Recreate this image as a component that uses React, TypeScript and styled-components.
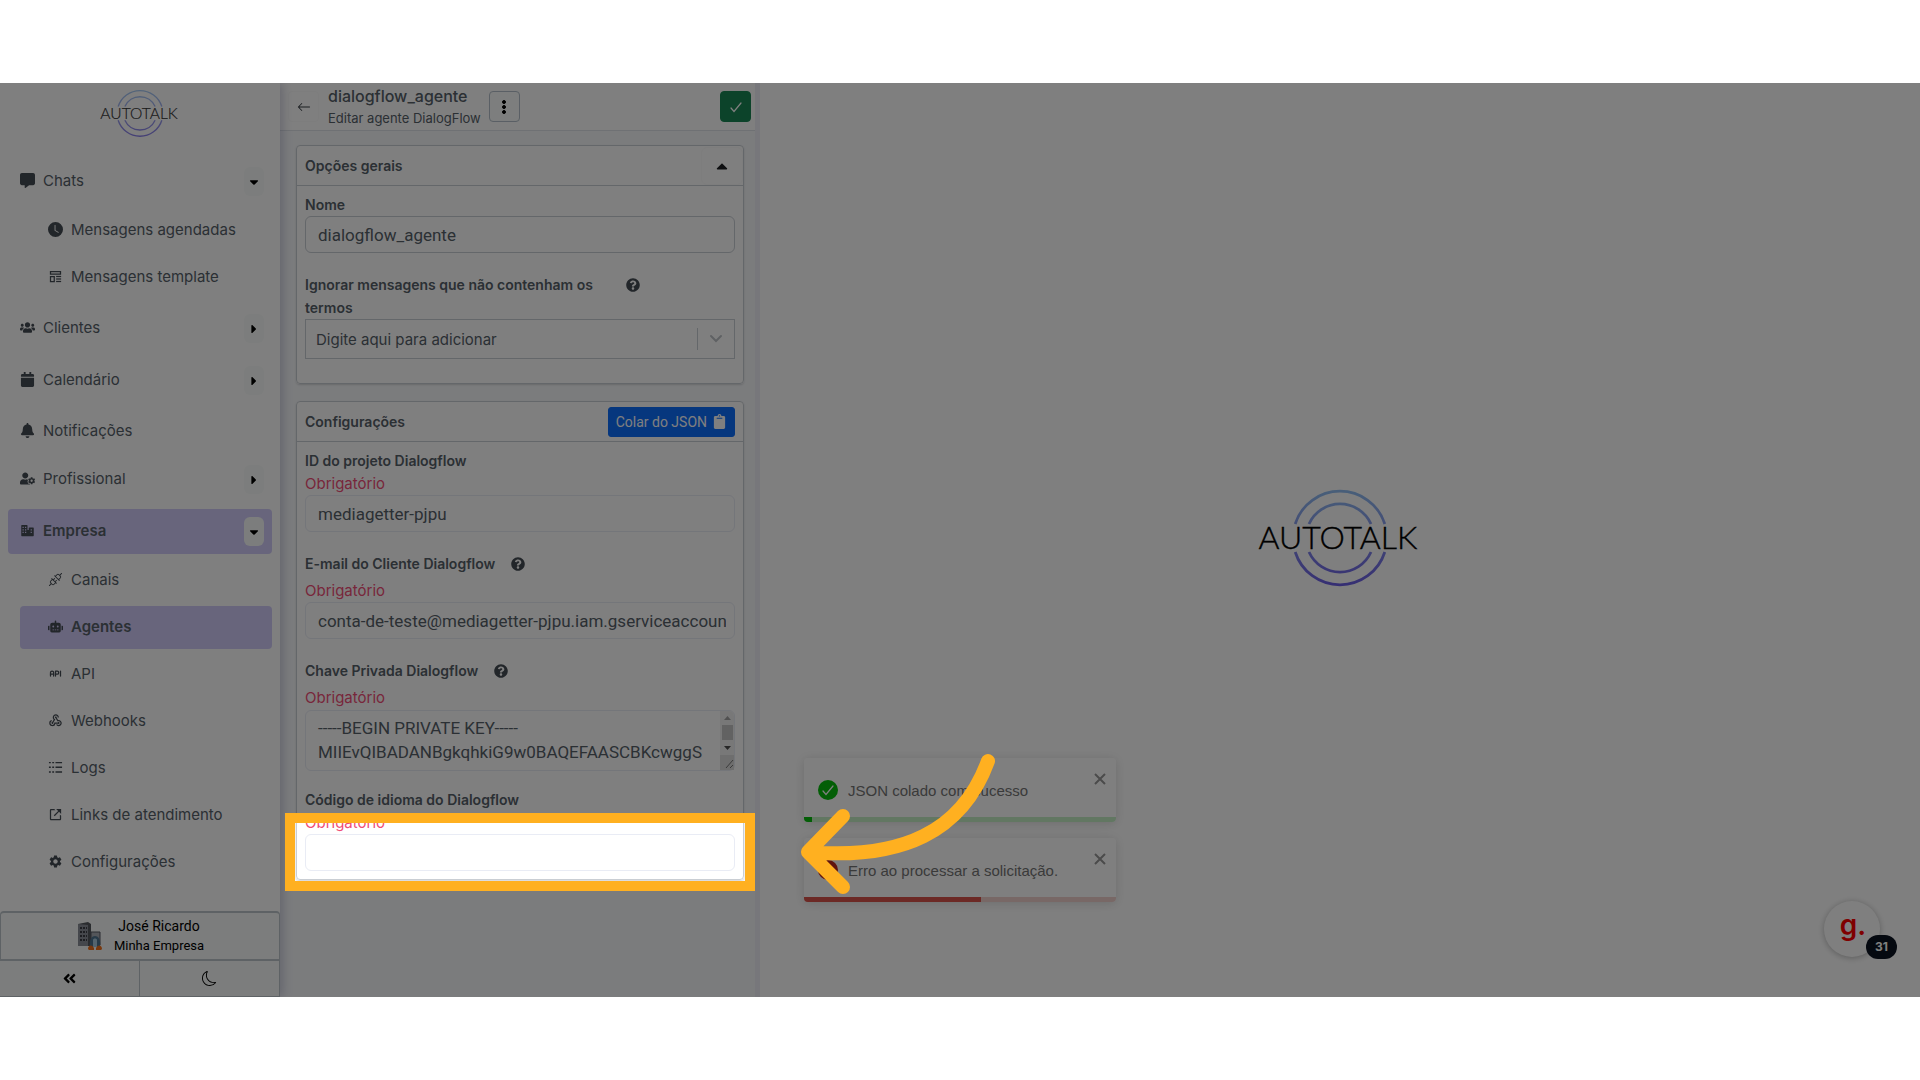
import React from "react";
import styled, { createGlobalStyle, css } from "styled-components";
import {
  FaUsers, FaBell, FaRobot, FaUserCog, FaCalendar, FaCaretDown, FaCaretRight, FaCaretUp,
  FaAngleDoubleLeft, FaClipboard, FaQuestionCircle,
} from "react-icons/fa";
import { FaMessage } from "react-icons/fa6";
import { BsClockFill, BsArrowLeft, BsThreeDotsVertical, BsMoon } from "react-icons/bs";
import { CgTemplate } from "react-icons/cg";
import { MdWebhook, MdSettings } from "react-icons/md";
import { TbApi } from "react-icons/tb";
import { PiPlugs } from "react-icons/pi";
import { BiLinkExternal, BiSolidBusiness } from "react-icons/bi";

const ui = `Inter, "Liberation Sans", sans-serif`;
const field = `Roboto, "Liberation Sans", sans-serif`;
const text = "#566069";
const dark = "#454c54";
const line = "#c9ced4";
const accent = "#ffb020";

const GlobalStyle = createGlobalStyle`
  *, *::before, *::after { box-sizing: border-box; }
  body { margin: 0; background: #fff; color: ${text}; font-family: ${ui}; font-size: 15px; }
  button, input, textarea { font: inherit; color: inherit; }
  ul { list-style: none; margin: 0; padding: 0; }
`;

const Stage = styled.div`
  display: flex;
  position: relative;
  height: calc(100vh - 166px);
  min-height: 914px;
  margin: 83px 0;
  overflow: hidden;
  background: #fff;
`;

/* Sidebar */
const Sidebar = styled.aside`
  flex: 0 0 280px;
  display: flex;
  flex-direction: column;
  background: #fff;
  box-shadow: 2px 0 10px rgba(60, 60, 120, 0.28);
  z-index: 1;
`;
const Brand = styled.a`
  display: flex;
  justify-content: center;
  padding: 6px 0 21px;
  opacity: 0.8;
`;
const Nav = styled.nav`
  flex: 1;
  padding: 0 8px;
  > ul { display: grid; gap: 7px; }
`;
const SubList = styled.ul`
  display: grid;
  gap: 4px;
  padding: 5px 0 0 12px;
`;
const NavRow = styled.div<{ $active?: boolean; $sub?: boolean; $plain?: boolean }>`
  display: flex;
  align-items: center;
  height: ${(p) => (p.$sub ? 43 : p.$plain ? 40 : 45)}px;
  padding: ${(p) => (p.$plain ? "3px" : "0")} 8px 0 ${(p) => (p.$sub ? 28 : 12)}px;
  border-radius: 4px;
  ${(p) => p.$active && css`background: #d1cbf8; font-weight: 600;`}
`;
const NavLink = styled.a`
  flex: 1;
  display: flex;
  align-items: center;
  gap: 8px;
  padding-bottom: 1px;
  color: ${text};
  text-decoration: none;
  svg { width: 15px; height: 15px; color: ${dark}; flex: none; }
`;
const Toggle = styled.button`
  display: grid;
  place-items: center;
  width: 20px;
  height: 29px;
  padding: 2px 0 0;
  border: 0;
  border-radius: 6px;
  background: #f8fbfa;
  color: #000;
  svg { width: 14px; height: 14px; }
`;
const Account = styled.button`
  display: flex;
  align-items: center;
  justify-content: center;
  gap: 12px;
  height: 50px;
  border: 2px solid #bcc4ca;
  border-width: 2px 1px;
  border-radius: 4px 4px 0 0;
  background: #f8fbfa;
  color: #000;
  font-family: ${field};
  font-size: 14px;
  line-height: 19px;
  small { display: block; font-size: 13px; }
`;
const FooterButtons = styled.div`
  display: grid;
  grid-template-columns: 1fr 1fr;
  height: 36px;
`;
const FooterButton = styled.button`
  display: grid;
  place-items: center;
  border: 1px solid #bcc4ca;
  border-width: 0 1px 1px 0;
  background: #f8fbfa;
  color: #000;
  svg { width: 15px; height: 15px; }
`;

/* Editor column */
const Editor = styled.section`
  flex: 0 0 480px;
  display: flex;
  flex-direction: column;
  background: #f6f8fb;
  border-right: 5px solid #efeff7;
`;
const EditorHeader = styled.header`
  display: flex;
  align-items: center;
  height: 48px;
  padding: 0 4px 0 8px;
  border-bottom: 1px solid #dfe3e8;
  background: #fff;
`;
const IconButton = styled.button<{ $kind?: "outline" | "success" }>`
  display: grid;
  place-items: center;
  width: 31px;
  height: 31px;
  padding: 0;
  border: 1px solid #fafafa;
  border-radius: 4px;
  background: #fff;
  color: #343a40;
  svg { width: 14px; height: 14px; }
  ${(p) => p.$kind === "outline" && css`border-color: #b4bfca; background: #fafdfc; color: #000; svg { width: 16px; height: 16px; stroke: #000; stroke-width: 1px; }`}
  ${(p) => p.$kind === "success" && css`border-color: #198754; background: #198754; color: #fff; margin-left: auto;`}
`;
const Heading = styled.div`
  padding: 0 8px 0 9px;
  h1 { margin: 0; font-size: 16px; line-height: 22px; font-weight: 500; }
  p { margin: 0; font-size: 13px; line-height: 22px; }
`;
const EditorBody = styled.form`
  display: grid;
  gap: 17px;
  padding: 14px 11px 0 16px;
`;
const Card = styled.fieldset`
  min-width: 0;
  margin: 0;
  padding: 0;
  border: 1px solid ${line};
  border-radius: 4px;
  background: #fff;
  box-shadow: 0 1px 2px rgba(0, 0, 0, 0.15);
`;
const CardHeader = styled.div`
  display: flex;
  align-items: center;
  justify-content: space-between;
  height: 40px;
  padding-left: 8px;
  border-bottom: 1px solid ${line};
  h2 { margin: 0; font-size: 14px; font-weight: 600; }
`;
const Collapse = styled.button`
  display: grid;
  place-items: center;
  width: 42px;
  height: 38px;
  padding: 0;
  border: 1px solid #fafafa;
  border-radius: 6px;
  background: transparent;
  color: #1c1f22;
  svg { width: 18px; height: 18px; }
`;
const Paste = styled.button`
  display: flex;
  align-items: center;
  gap: 5px;
  height: 30px;
  margin-right: 8px;
  padding: 0 7px;
  border: 1px solid #0d6efd;
  border-radius: 3px;
  background: #0d6efd;
  color: #fff;
  font-family: ${field};
  font-size: 14px;
`;
const Fields = styled.div<{ $roomy?: boolean }>`
  display: grid;
  gap: 17px;
  padding: 7px 8px ${(p) => (p.$roomy ? 24 : 8)}px;
`;
const FieldBox = styled.div`
  min-width: 0;
  position: relative;
`;
const LabelRow = styled.div`
  display: flex;
  gap: 16px;
  align-items: flex-start;
  padding: 3px 0 4px;
`;
const WrapLabelRow = styled(LabelRow)`
  gap: 8px;
  padding: 3px 0 0;
  label { flex: 0 1 313px; }
`;
const Label = styled.label`
  display: block;
  font-size: 14px;
  font-weight: 600;
  line-height: 23px;
`;
const Help = styled.button`
  display: block;
  padding: 5px 0 0;
  border: 0;
  background: none;
  color: ${dark};
  svg { display: block; width: 14px; height: 14px; }
`;
const Required = styled.div`
  color: #f04d76;
  font-size: 15px;
  line-height: 23px;
`;
const inputStyle = css`
  display: block;
  width: 100%;
  border: 1px solid #e9ecf5;
  border-radius: 6px;
  background: transparent;
  outline: 0;
  font-family: ${field};
  font-size: 17px;
`;
const Input = styled.input<{ $strong?: boolean }>`
  ${inputStyle}
  height: 37px;
  padding: 0 8px 0 12px;
  ${(p) => p.$strong && css`border-color: ${line};`}
`;
const AreaBox = styled.div`
  position: relative;
  margin-top: 1px;
`;
const Area = styled.textarea`
  ${inputStyle}
  height: 61px;
  padding: 5px 18px 0 12px;
  line-height: 24px;
  overflow: hidden;
  resize: none;
`;
const ScrollBar = styled.div`
  position: absolute;
  inset: 1px 1px 1px auto;
  width: 14px;
  display: flex;
  flex-direction: column;
  border-radius: 0 5px 0 0;
  background: #f1f1f1;
  overflow: hidden;
  svg { display: block; width: 14px; }
`;
const Thumb = styled.div`
  height: 15px;
  margin: 0 1px 0 2px;
  background: #c4c4c4;
`;
const Grip = styled.div`
  height: 15px;
  margin-top: auto;
  background: #dcdcdc;
`;
const TagSelect = styled.div`
  display: flex;
  align-items: center;
  height: 40px;
  border: 1px solid ${line};
`;
const TagInput = styled.input`
  flex: 1;
  min-width: 0;
  padding: 0 10px;
  border: 0;
  outline: 0;
  background: transparent;
  font-size: 15px;
  &::placeholder { color: ${text}; opacity: 1; }
`;
const TagArrow = styled.button`
  display: grid;
  place-items: center;
  width: 37px;
  height: 22px;
  padding: 0;
  border: 0;
  border-left: 1px solid ${line};
  background: none;
  color: #bfc3c7;
`;
/* Lights up the block it lies over and darkens everything else in the stage */
const Spotlight = styled.div`
  position: absolute;
  inset: 2px -20px -20px;
  z-index: 10;
  border: 10px solid ${accent};
  box-shadow: 0 0 0 4000px rgba(0, 0, 0, 0.5);
  pointer-events: none;
`;

/* Main area */
const Main = styled.main`
  flex: 1;
  position: relative;
  display: grid;
  place-items: center;
  padding-bottom: 4px;
  background: #fff;
`;
const Toasts = styled.div`
  position: absolute;
  left: 44px;
  bottom: 95px;
  display: grid;
  gap: 16px;
`;
const ToastBox = styled.div`
  display: flex;
  align-items: center;
  position: relative;
  width: 312px;
  height: 64px;
  padding: 0 10px 0 14px;
  overflow: hidden;
  border-radius: 4px;
  background: #fff;
  color: #757575;
  font-family: "Liberation Sans", Arial, sans-serif;
  font-size: 15px;
`;
const ToastShadow = styled.div`
  border-radius: 4px;
  box-shadow: 0 1px 10px rgba(0, 0, 0, 0.1), 0 2px 15px rgba(0, 0, 0, 0.05);
`;
const Badge = styled.span<{ $color: string }>`
  display: grid;
  place-items: center;
  width: 20px;
  height: 20px;
  margin-right: 10px;
  border-radius: 50%;
  background: ${(p) => p.$color};
  color: #fff;
  svg { width: 14px; height: 14px; }
`;
const Close = styled.button`
  align-self: flex-start;
  margin: 15px 0 0 auto;
  padding: 0;
  border: 0;
  background: none;
  color: #969696;
  svg { display: block; }
`;
const Progress = styled.div<{ $color: string; $track: string }>`
  position: absolute;
  inset: auto 0 0;
  height: 5px;
  background: ${(p) => p.$track};
  div { height: 100%; background: ${(p) => p.$color}; }
`;
const Arrow = styled.svg`
  position: absolute;
  left: 40px;
  bottom: 100px;
  z-index: 11;
`;
const Widget = styled.button`
  position: absolute;
  right: 40px;
  bottom: 40px;
  width: 56px;
  height: 56px;
  padding: 0 0 8px 2px;
  border: 0;
  border-radius: 50%;
  background: #fff;
  box-shadow: 0 1px 6px rgba(0, 0, 0, 0.28);
  color: #ff0000;
  font-size: 28px;
  font-weight: 600;
  line-height: 40px;
`;
const Count = styled.span`
  position: absolute;
  right: -17px;
  bottom: -2px;
  width: 31px;
  height: 24px;
  border-radius: 12px;
  background: #0b1220;
  color: #fff;
  font: 700 12px/24px ${ui};
`;

function Logo({ width }: { width: number }) {
  const id = "ring" + width;
  return (
    <svg width={width} height={(width * 100) / 164} viewBox="0 0 164 100" role="img" aria-label="Autotalk">
      <defs>
        <linearGradient id={id} gradientUnits="userSpaceOnUse" x1="0" y1="3" x2="0" y2="97">
          <stop offset="0" stopColor="#90bdf2" />
          <stop offset="0.5" stopColor="#8590ea" />
          <stop offset="1" stopColor="#6c5fe6" />
        </linearGradient>
      </defs>
      <g fill="none" stroke={`url(#${id})`} strokeWidth="2.800">
        <path d="M37.200 36A47 47 0 0 1 126.800 36M37.200 64A47 47 0 0 0 126.800 64" />
        <path d="M51 36A34 34 0 0 1 113 36M51 64A34 34 0 0 0 113 64" />
      </g>
      <text x="80" y="61" textAnchor="middle" fontFamily="Lato, sans-serif" fontWeight="300" fontSize="32" fill="#000" stroke="#000" strokeWidth="0.400">
        AUTOTALK
      </text>
    </svg>
  );
}

function LogsIcon() {
  return (
    <svg viewBox="0 0 16 16" fill="currentColor" aria-hidden="true">
      {[2, 7, 12].map((y) => (
        <path key={y} d={`M1 ${y}h2v1.500H1zM4.500 ${y}h2v1.500h-2zM8 ${y}h7v1.500H8z`} />
      ))}
    </svg>
  );
}

function CheckIcon() {
  return (
    <svg viewBox="0 0 14 14" fill="none" stroke="currentColor" strokeWidth="1.200" strokeLinecap="round" aria-hidden="true">
      <path d="M2 8l3 3.500L12 3" />
    </svg>
  );
}

function CompanyPicture() {
  return (
    <svg width="26" height="30" viewBox="0 0 26 30" aria-hidden="true">
      <path d="M2 3l10-2 3 2v22H2z" fill="#55585f" />
      <path d="M2 3l10 1v21H2z" fill="#8b8f98" />
      <g fill="#3c3f47">
        {[6, 10, 14, 18].map((y) => (
          <path key={y} d={`M4 ${y}h2v2H4zM7 ${y}h2v2H7zM10 ${y}h1v2h-1z`} />
        ))}
      </g>
      <path d="M15 11h9v13h-9z" fill="#a9adb5" stroke="#555962" />
      <path d="M14 26c-1-8 2-11 5-11s6 3 5 11z" fill="#4f7590" />
      <path d="M17 19c0-2 4-2 4 0v7h-4z" fill="#a8c8dc" />
      <path d="M12 28c0-4 4-5 6-1v2h-5zM26 28c0-4-4-5-6-1v2h5z" fill="#f0701c" />
    </svg>
  );
}

type Item = { name: string; icon: React.ReactNode; active?: boolean };
type Group = Item & { open?: boolean; toggle?: boolean; items?: Item[] };

const menu: Group[] = [
  {
    name: "Chats", icon: <FaMessage />, toggle: true, open: true,
    items: [
      { name: "Mensagens agendadas", icon: <BsClockFill /> },
      { name: "Mensagens template", icon: <CgTemplate /> },
    ],
  },
  { name: "Clientes", icon: <FaUsers />, toggle: true },
  { name: "Calendário", icon: <FaCalendar />, toggle: true },
  { name: "Notificações", icon: <FaBell /> },
  { name: "Profissional", icon: <FaUserCog />, toggle: true },
  {
    name: "Empresa", icon: <BiSolidBusiness />, toggle: true, open: true, active: true,
    items: [
      { name: "Canais", icon: <PiPlugs /> },
      { name: "Agentes", icon: <FaRobot />, active: true },
      { name: "API", icon: <TbApi /> },
      { name: "Webhooks", icon: <MdWebhook /> },
      { name: "Logs", icon: <LogsIcon /> },
      { name: "Links de atendimento", icon: <BiLinkExternal /> },
      { name: "Configurações", icon: <MdSettings /> },
    ],
  },
];

function HelpButton() {
  return <Help type="button" aria-label="Ajuda"><FaQuestionCircle /></Help>;
}

function Toast({ message, color, track, bar, done, children }: {
  message: string; color: string; track: string; bar: string; done: number; children: React.ReactNode;
}) {
  return (
    <ToastShadow>
      <ToastBox role="alert">
        <Badge $color={color}>{children}</Badge>
        {message}
        <Close type="button" aria-label="Fechar">
          <svg width="12" height="12" viewBox="0 0 12 12" stroke="currentColor" strokeWidth="2"><path d="M1 1l10 10M11 1L1 11" /></svg>
        </Close>
        <Progress $color={bar} $track={track}><div style={{ width: `${done}%` }} /></Progress>
      </ToastBox>
    </ToastShadow>
  );
}

export default function App() {
  return (
    <>
      <GlobalStyle />
      <Stage>
        <Sidebar>
          <Brand href="#"><Logo width={80} /></Brand>
          <Nav>
            <ul>
              {menu.map((g) => (
                <li key={g.name}>
                  <NavRow $active={g.active} $plain={!g.toggle}>
                    <NavLink href="#">{g.icon}{g.name}</NavLink>
                    {g.toggle && (
                      <Toggle type="button" aria-label={g.name}>{g.open ? <FaCaretDown /> : <FaCaretRight />}</Toggle>
                    )}
                  </NavRow>
                  {g.items && (
                    <SubList>
                      {g.items.map((i) => (
                        <li key={i.name}>
                          <NavRow $sub $active={i.active}><NavLink href="#">{i.icon}{i.name}</NavLink></NavRow>
                        </li>
                      ))}
                    </SubList>
                  )}
                </li>
              ))}
            </ul>
          </Nav>
          <Account type="button">
            <CompanyPicture />
            <span>José Ricardo<small>Minha Empresa</small></span>
          </Account>
          <FooterButtons>
            <FooterButton type="button" aria-label="Recolher"><FaAngleDoubleLeft /></FooterButton>
            <FooterButton type="button" aria-label="Tema escuro"><BsMoon /></FooterButton>
          </FooterButtons>
        </Sidebar>

        <Editor>
          <EditorHeader>
            <IconButton type="button" aria-label="Voltar"><BsArrowLeft /></IconButton>
            <Heading>
              <h1>dialogflow_agente</h1>
              <p>Editar agente DialogFlow</p>
            </Heading>
            <IconButton type="button" $kind="outline" aria-label="Opções"><BsThreeDotsVertical /></IconButton>
            <IconButton type="button" $kind="success" aria-label="Salvar"><CheckIcon /></IconButton>
          </EditorHeader>
          <EditorBody>
            <Card>
              <CardHeader>
                <h2>Opções gerais</h2>
                <Collapse type="button" aria-label="Recolher opções"><FaCaretUp /></Collapse>
              </CardHeader>
              <Fields $roomy>
                <FieldBox>
                  <Label htmlFor="name">Nome</Label>
                  <Input id="name" $strong defaultValue="dialogflow_agente" />
                </FieldBox>
                <FieldBox>
                  <WrapLabelRow>
                    <Label htmlFor="terms">Ignorar mensagens que não contenham os termos</Label>
                    <HelpButton />
                  </WrapLabelRow>
                  <TagSelect>
                    <TagInput id="terms" placeholder="Digite aqui para adicionar" />
                    <TagArrow type="button" aria-label="Abrir lista">
                      <svg width="14" height="10" viewBox="0 0 14 10" fill="none" stroke="currentColor" strokeWidth="2" strokeLinecap="round"><path d="M2 2l5 5 5-5" /></svg>
                    </TagArrow>
                  </TagSelect>
                </FieldBox>
              </Fields>
            </Card>
            <Card>
              <CardHeader>
                <h2>Configurações</h2>
                <Paste type="button">Colar do JSON <FaClipboard size={15} /></Paste>
              </CardHeader>
              <Fields>
                <FieldBox>
                  <Label htmlFor="project">ID do projeto Dialogflow</Label>
                  <Required>Obrigatório</Required>
                  <Input id="project" defaultValue="mediagetter-pjpu" />
                </FieldBox>
                <FieldBox>
                  <LabelRow><Label htmlFor="email">E-mail do Cliente Dialogflow</Label><HelpButton /></LabelRow>
                  <Required>Obrigatório</Required>
                  <Input id="email" defaultValue="conta-de-teste@mediagetter-pjpu.iam.gserviceaccount.com" />
                </FieldBox>
                <FieldBox>
                  <LabelRow><Label htmlFor="key">Chave Privada Dialogflow</Label><HelpButton /></LabelRow>
                  <Required>Obrigatório</Required>
                  <AreaBox>
                    <Area
                      id="key"
                      defaultValue={"-----BEGIN PRIVATE KEY-----\nMIIEvQIBADANBgkqhkiG9w0BAQEFAASCBKcwggS\nHwgEAAoIBAQDkvBUhIMOMzOQW\n-----END PRIVATE KEY-----"}
                    />
                    <ScrollBar aria-hidden="true">
                      <svg height="14" viewBox="0 0 14 14"><path d="M4 9l3.500-4L11 9z" fill="#a3a3a3" /></svg>
                      <Thumb />
                      <svg height="14" viewBox="0 0 14 14"><path d="M4 6l3.500 4L11 6z" fill="#505050" /></svg>
                      <Grip><svg height="14" viewBox="0 0 14 14" stroke="#777" fill="none"><path d="M6 13l7-8M10 13l3-3" /></svg></Grip>
                    </ScrollBar>
                  </AreaBox>
                </FieldBox>
                <FieldBox>
                  <Label htmlFor="lang">Código de idioma do Dialogflow</Label>
                  <FieldBox>
                    <Required>Obrigatório</Required>
                    <Input id="lang" />
                    <Spotlight />
                  </FieldBox>
                </FieldBox>
              </Fields>
            </Card>
          </EditorBody>
        </Editor>

        <Main>
          <Logo width={164} />
          <Toasts>
            <Toast message="JSON colado com sucesso" color="#07bc0c" bar="#07bc0c" track="#c4efc5" done={2.6}>
              <CheckIcon />
            </Toast>
            <Toast message="Erro ao processar a solicitação." color="#c0281f" bar="#d8534a" track="#f0d0cd" done={56.6}>
              <svg viewBox="0 0 14 14" stroke="currentColor" strokeWidth="2"><path d="M7 2v6M7 10v2" /></svg>
            </Toast>
          </Toasts>
          <Arrow width="210" height="150" viewBox="800 747 210 150" fill="none" stroke={accent} strokeWidth="14" strokeLinecap="round" strokeLinejoin="round" aria-hidden="true">
            <path d="M988 761C962 832 902 860 808 852M843 816L808 852L843 887" />
          </Arrow>
          <Widget type="button">g.<Count>31</Count></Widget>
        </Main>
      </Stage>
    </>
  );
}
